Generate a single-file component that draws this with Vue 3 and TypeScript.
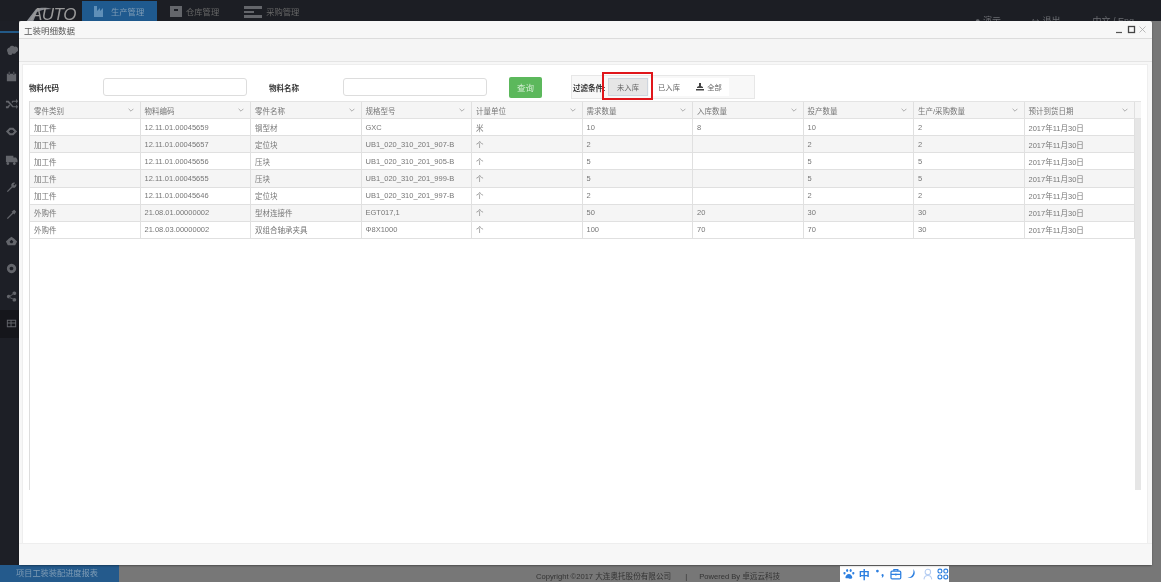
<script setup lang="ts">
const columns: string[] = ['零件类别', '物料编码', '零件名称', '规格型号', '计量单位', '需求数量', '入库数量', '投产数量', '生产/采购数量', '预计到货日期']
const d = '2017年11月30日'
const rows: string[][] = [
  ['加工件', '12.11.01.00045659', '钢型材', 'GXC', '米', '10', '8', '10', '2', d],
  ['加工件', '12.11.01.00045657', '定位块', 'UB1_020_310_201_907-B', '个', '2', '', '2', '2', d],
  ['加工件', '12.11.01.00045656', '压块', 'UB1_020_310_201_905-B', '个', '5', '', '5', '5', d],
  ['加工件', '12.11.01.00045655', '压块', 'UB1_020_310_201_999-B', '个', '5', '', '5', '5', d],
  ['加工件', '12.11.01.00045646', '定位块', 'UB1_020_310_201_997-B', '个', '2', '', '2', '2', d],
  ['外购件', '21.08.01.00000002', '型材连接件', 'EGT017,1', '个', '50', '20', '30', '30', d],
  ['外购件', '21.08.03.00000002', '双组合轴承夹具', 'Φ8X1000', '个', '100', '70', '70', '30', d],
]
const sideIcons: string[] = [
  'M3 11a3 3 0 0 1 2-5 3 3 0 0 1 5-1 3 3 0 0 1 2 6 2.5 2.5 0 0 1-4 1 2.5 2.5 0 0 1-5-1z',
  'M2 4h10v8H2zM4 2h1v3H4zM9 2h1v3H9z',
  'M1 4h3l5 6h3v-2l2 2.500-2 2.500v-2H8L3 6H1zM1 10h2l1.500-2 1 1.200L3.500 12H1zM8 4h4V2l2 2.500L12 7V5H9L8 6.500 7 5.300z',
  'M1 7l4-4h4l4 4-4 4H5zM4 7l2 2h2l2-2-2-2H6z',
  'M1 4h8v7H1zM9 6h3l1.500 2.500V11H9zM3 11a1.500 1.500 0 1 0 .1 0zM10 11a1.500 1.500 0 1 0 .1 0z',
  'M2 12l5-5a3 3 0 0 1 4-4L9 5l1 1 2-2a3 3 0 0 1-4 4l-5 5z',
  'M2 12l6-6-1-1 3-2 2 2-2 3-1-1-6 6z',
  'M7 2l3 2 3 3-2 4H3L1 7l3-3zM7 5L5 7l1 2h2l1-2z',
  'M7 2a5 5 0 1 0 .1 0zM7 5a2 2 0 1 1-.1 0z',
  'M4 5a2 2 0 1 0 .1 0zM10 1.500a2 2 0 1 0 .1 0zM10 8.500a2 2 0 1 0 .1 0zM5 6l4-2 .4.800-4 2zM5 7.500l4 2-.4.800-4-2z',
  'M2 3h10v8H2zM3 4v2h3V4zM7 4v2h4V4zM3 7v3h3V7zM7 7v3h4V7z',
]
</script>

<template>
  <div class="page">
    <header class="topbar">
      <div class="logo">
        <svg class="swoosh" viewBox="0 0 30 16" width="30" height="16"><path d="M2 15 L12 2 C18 0 24 1 28 2 C22 2 17 3 13 5 L9 15z" fill="#8b8e94" /></svg>
        <span>AUTO</span>
      </div>
      <nav class="nav">
        <div class="tab active">
          <svg width="13" height="12" viewBox="0 0 13 12"><path d="M0 1h3v5l3-3v3l3-3v9H0z" fill="#5f8fb8" /></svg>
          <span>生产管理</span>
        </div>
        <div class="tab store">
          <svg width="12" height="12" viewBox="0 0 12 12"><path d="M0 1h12v11H0zM4 4v2h4V4z" fill="#64666b" fill-rule="evenodd" /></svg>
          <span>仓库管理</span>
        </div>
        <div class="tab buy">
          <svg width="18" height="13" viewBox="0 0 18 13"><path d="M0 1h18v3H0zM0 6h10v2H0zM0 10h18v3H0z" fill="#64666b" /></svg>
          <span>采购管理</span>
        </div>
      </nav>
      <div class="user">
        <span class="u1">● 演示</span>
        <span class="u2">▬</span>
        <span class="u3">↪ 退出</span>
        <span class="u4">中文 / Eng</span>
      </div>
    </header>

    <div class="middle">
      <aside class="side">
        <div class="side-line"></div>
        <div v-for="(p, i) in sideIcons" :key="i" class="side-item" :class="{ current: i === 10 }">
          <svg width="13" height="13" viewBox="0 0 14 14"><path :d="p" fill="#63656b" fill-rule="evenodd" /></svg>
        </div>
      </aside>
    </div>

    <footer class="bottom">
      <div class="crumb">项目工装装配进度报表</div>
      <div class="copy">Copyright ©2017 大连奥托股份有限公司<span class="sep">|</span>Powered By 卓远云科技</div>
      <div class="ime">
        <svg width="12" height="12" viewBox="0 0 12 12"><path d="M6 6c2 0 3.500 2 3.500 3.500S7 11 6 10.500 2.500 11 2.500 9.500 4 6 6 6zM1.500 4a1 1.300 0 1 0 .1 0zM10.500 4a1 1.300 0 1 0 .1 0zM4.200 1a1.100 1.500 0 1 0 .1 0zM7.800 1a1.100 1.500 0 1 0 .1 0z" fill="#2c7fe0" /></svg>
        <span class="zh">中</span>
        <svg width="12" height="12" viewBox="0 0 12 12"><circle cx="3.500" cy="3" r="1.400" fill="#2c7fe0" /><path d="M8.500 6a1.400 1.400 0 0 1 1.400 1.400c0 1.300-1 2.300-2.200 2.600.6-.8.700-1.300.5-1.700A1.400 1.400 0 0 1 8.500 6z" fill="#2c7fe0" /></svg>
        <svg width="12" height="12" viewBox="0 0 12 12" fill="none" stroke="#2c7fe0" stroke-width="1.300"><rect x="1" y="3" width="10" height="8" rx="1.200" /><path d="M4 3V1.500h4V3M1 6.500h10M6 5.500v2" /></svg>
        <svg width="12" height="12" viewBox="0 0 12 12"><path d="M7.500 1c2 2.500 2 6-.5 8-1.500 1.200-3.500 1.400-5.500.8 2.500-.2 3.600-1 4.800-2.500C7.500 5.700 8 3.500 7.500 1z" fill="#2c7fe0" /></svg>
        <svg width="12" height="12" viewBox="0 0 12 12" fill="none" stroke="#b5cdf2" stroke-width="1.100"><circle cx="6" cy="4" r="2.800" /><path d="M2 11.500c.3-2.600 1.700-4 4-4s3.700 1.400 4 4" /></svg>
        <svg width="12" height="12" viewBox="0 0 12 12" fill="none" stroke="#2c7fe0" stroke-width="1.200"><rect x="1" y="1" width="4" height="4" rx="1.800" /><rect x="7" y="1" width="4" height="4" rx="1.800" /><rect x="1" y="7" width="4" height="4" rx="1.800" /><rect x="7" y="7" width="4" height="4" rx="1.800" /></svg>
      </div>
    </footer>

    <section class="win">
      <div class="win-title">
        <span>工装明细数据</span>
        <div class="win-ctrl">
          <svg width="9" height="9" viewBox="0 0 9 9"><path d="M1 7.500h6" stroke="#555" stroke-width="1.200" /></svg>
          <svg width="9" height="9" viewBox="0 0 9 9"><rect x="1.500" y="1.500" width="6" height="6" fill="none" stroke="#444" stroke-width="1.300" /></svg>
          <svg width="9" height="9" viewBox="0 0 9 9"><path d="M1.500 1.500l6 6M7.500 1.500l-6 6" stroke="#aaa" stroke-width=".8" /></svg>
        </div>
      </div>
      <div class="win-tools"></div>
      <div class="win-body">
        <form class="filters" @submit.prevent>
          <label class="lbl lbl-code">物料代码</label>
          <input class="inp" type="text" />
          <label class="lbl lbl-name">物料名称</label>
          <input class="inp" type="text" />
          <button class="query" type="button">查询</button>
          <div class="group">
            <span class="lbl group-lbl">过滤条件:</span>
            <button class="seg on" type="button">未入库</button>
            <button class="seg" type="button">已入库</button>
            <button class="seg" type="button">
              <svg width="8" height="8" viewBox="0 0 8 8"><path d="M3 0h2v3l2 1v1H1V4l2-1zM0 6h8v1.500H0z" fill="#444" />
              </svg>
              全部
            </button>
            <div class="mark"></div>
          </div>
        </form>

        <div class="grid">
          <div class="grid-main">
            <div class="row head">
              <div v-for="c in columns" :key="c" class="cell">
                <span>{{ c }}</span>
                <svg width="6" height="4" viewBox="0 0 6 4"><path d="M.6.800 3 3.200 5.400.800" fill="none" stroke="#999" stroke-width=".8" /></svg>
              </div>
              <div class="head-gap"></div>
            </div>
            <div class="rows-wrap">
              <div class="rows">
                <div v-for="(r, i) in rows" :key="i" class="row data" :class="{ odd: i % 2 === 1 }">
                  <div v-for="(v, j) in r" :key="j" class="cell">{{ v }}</div>
                </div>
              </div>
              <div class="scroll"></div>
            </div>
          </div>
        </div>
      </div>
      <div class="win-foot"></div>
    </section>
  </div>
</template>

<style scoped>
.page {
  position: relative;
  width: 1161px;
  height: 582px;
  overflow: hidden;
  display: flex;
  flex-direction: column;
  background: #777;
  font-family: "Liberation Sans", "Noto Sans CJK SC", sans-serif;
  filter: blur(0.35px);
}
.topbar {
  height: 21px;
  flex: none;
  display: flex;
  background: #1c1e24;
  overflow: hidden;
  color: #777;
  font-size: 10px;
}
.logo {
  width: 82px;
  padding-left: 25px;
  box-sizing: border-box;
  position: relative;
  color: #999;
  font-size: 17px;
  font-style: italic;
  line-height: 30px;
  letter-spacing: -0.5px;
}
.swoosh { position: absolute; left: 24px; top: 7px; }
.logo span { position: relative; left: 6px; top: 0; }
.nav { display: flex; }
.tab {
  display: flex;
  align-items: center;
  gap: 4px;
  height: 20px;
  margin-top: 1px;
  font-size: 8.3px;
  color: #666;
}
.tab.active {
  width: 75px;
  padding-left: 12px;
  box-sizing: border-box;
  background: #1f5a8f;
  color: #7f9cb5;
}
.tab.store { margin-left: 13px; }
.tab.buy { margin-left: 25px; }
.user { position: absolute; top: 12px; left: 975px; display: flex; font-size: 9px; line-height: 18px; color: #6b6d72; }
.u2 { margin-left: 10px; }
.u3 { margin-left: 12px; }
.u4 { margin-left: 32px; }
.middle { flex: 1; display: flex; min-height: 0; }
.side {
  width: 19px;
  background: #1d1f26;
  display: flex;
  flex-direction: column;
  overflow: hidden;
}
.side-line { height: 1.500px; margin-top: 10px; margin-bottom: 2.500px; background: #235a88; flex: none; }
.side-item {
  flex: none;
  height: 27.500px;
  display: flex;
  align-items: center;
  justify-content: flex-start;
  padding-left: 5px;
}
.side-item.current { background: #15161b; }
.bottom {
  height: 17px;
  flex: none;
  display: flex;
  align-items: center;
  font-size: 7.6px;
  color: #333;
  position: relative;
}
.crumb {
  width: 119px;
  height: 17px;
  box-sizing: border-box;
  padding-left: 16px;
  line-height: 17px;
  background: #245a8c;
  color: #7f9cb5;
  font-size: 8.200px;
}
.copy {
  margin-left: 417px;
  padding-top: 3px;
  white-space: nowrap;
  width: 304px;
  flex: none;
}
.sep { margin: 0 12px 0 14px; }
.ime {
  width: 109px;
  height: 16px;
  margin-top: 1px;
  background: #fff;
  display: flex;
  align-items: center;
  gap: 4px;
  padding-left: 3px;
  box-sizing: border-box;
}
.zh { color: #2c7fe0; font-size: 11px; font-weight: 700; width: 12px; }

.win {
  position: absolute;
  left: 19px;
  top: 21px;
  width: 1133px;
  height: 544px;
  background: #f7f7f7;
  display: flex;
  flex-direction: column;
  border-radius: 2px;
  box-shadow: 0 1px 2px rgba(0, 0, 0, 0.35);
}
.win-title {
  height: 17px;
  flex: none;
  box-sizing: content-box;
  border-bottom: 1px solid #dcdcdc;
  display: flex;
  align-items: center;
  justify-content: space-between;
  padding: 0 5px;
  font-size: 8.500px;
  color: #555;
}
.win-ctrl { display: flex; gap: 2.500px; margin-top: -1px; }
.win-tools {
  height: 22px;
  flex: none;
  background: #f5f5f5;
  border-bottom: 1px solid #e4e4e4;
}
.win-body {
  flex: 1;
  min-height: 0;
  margin: 2px 4px 0 3px;
  background: #fff;
  border: 1px solid #eee;
  border-bottom: 0;
  display: flex;
  flex-direction: column;
  padding: 0 6px 53px 6px;
}
.win-foot { height: 21px; flex: none; background: #f7f7f7; border-top: 1px solid #eee; }

.filters {
  height: 35px;
  flex: none;
  display: flex;
  align-items: center;
  padding-top: 9px;
  box-sizing: border-box;
}
.lbl { font-size: 7.500px; font-weight: 700; color: #333; }
.lbl-code { width: 74px; flex: none; }
.lbl-name { width: 74px; flex: none; margin-left: 22px; }
.inp {
  width: 144px;
  height: 18px;
  flex: none;
  box-sizing: border-box;
  padding: 0;
  border: 1px solid #ddd;
  border-radius: 3px;
  background: #fff;
}
.query {
  width: 33px;
  height: 21px;
  flex: none;
  margin-left: 22px;
  padding: 0;
  border: 0;
  border-radius: 2px;
  background: #5cb85c;
  color: #d3edd3;
  font: 8.500px "Liberation Sans", "Noto Sans CJK SC", sans-serif;
}
.group {
  position: relative;
  width: 184px;
  height: 24px;
  flex: none;
  margin-left: 29px;
  box-sizing: border-box;
  border: 1px solid #e7e7e7;
  background: #f8f8f8;
  display: flex;
  align-items: center;
  padding-left: 1px;
}
.group-lbl { width: 35px; flex: none; white-space: nowrap; }
.seg {
  width: 40px;
  height: 18px;
  flex: none;
  padding: 0;
  border: 0;
  background: #fff;
  color: #666;
  font: 7.300px "Liberation Sans", "Noto Sans CJK SC", sans-serif;
}
.seg.on {
  background: #e6e6e6;
  border: 1px solid #cfd6de;
  box-sizing: border-box;
  margin-right: 1px;
}
.seg svg { vertical-align: -1px; margin-right: 1px; }
.mark {
  position: absolute;
  left: 30px;
  top: -4px;
  width: 51px;
  height: 28px;
  box-sizing: border-box;
  border: 2px solid #e0161b;
}

.grid {
  flex: 1;
  min-height: 0;
  display: flex;
  margin-top: 1px;
}
.grid-main {
  width: 1112px;
  flex: none;
  display: flex;
  flex-direction: column;
  border-left: 1px solid #ddd;
  box-sizing: border-box;
}
.row { display: flex; box-sizing: border-box; }
.head {
  height: 18px;
  flex: none;
  background: #f5f5f5;
  border-top: 1px solid #e4e4e4;
  border-bottom: 1px solid #e2e2e2;
}
.head .cell { justify-content: space-between; padding-right: 6px; color: #777; }
.head-gap { flex: 1; }
.rows-wrap { flex: 1; min-height: 0; display: flex; }
.rows { width: 1105px; flex: none; }
.scroll { width: 6px; background: #e6e6e6; }
.data {
  height: 17.140px;
  border-bottom: 1px solid #e0e0e0;
}
.data.odd { background: #f5f5f5; }
.cell {
  width: 110.500px;
  flex: none;
  box-sizing: border-box;
  padding-left: 4px;
  display: flex;
  align-items: center;
  border-right: 1px solid #e0e0e0;
  font-size: 7.500px;
  color: #777;
  white-space: nowrap;
  overflow: hidden;
}
</style>
